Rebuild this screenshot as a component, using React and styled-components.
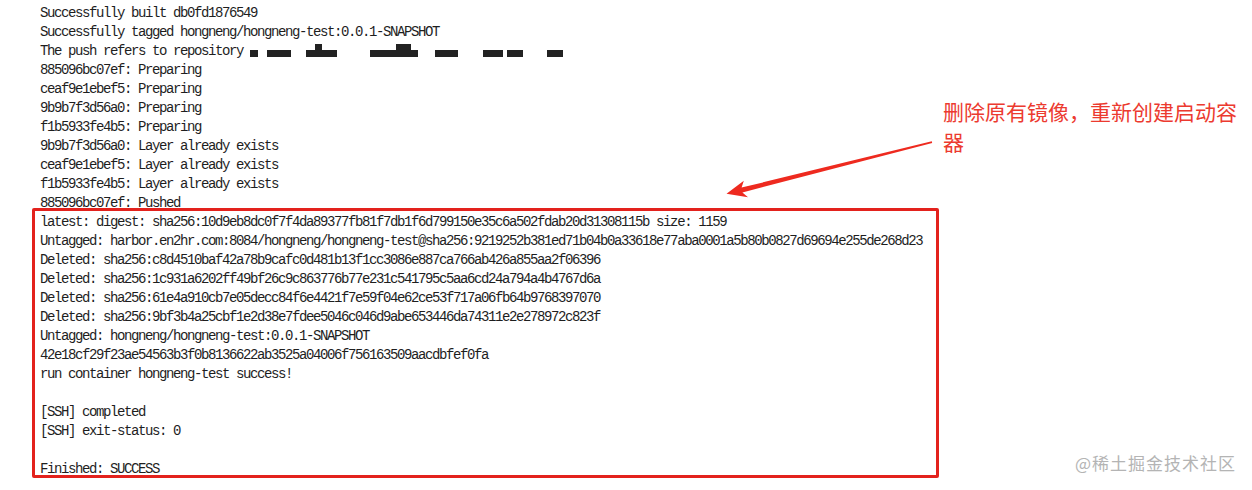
import React from "react";
import styled, { createGlobalStyle } from "styled-components";

const Global = createGlobalStyle`
  html, body { margin: 0; padding: 0; background: #ffffff; }
`;

const Page = styled.div`
  position: relative;
  width: 1252px;
  height: 490px;
  overflow: hidden;
  box-sizing: border-box;
  padding: 4px 0 0 40px;
  background: #ffffff;
  font-family: "Liberation Mono", "Courier New", monospace;
  font-size: 14px;
  letter-spacing: -1.4px;
  line-height: 19px;
  color: #1e1e1e;
`;

const Line = styled.div`
  min-height: 19px;
  white-space: pre;
`;

const RedactGroup = styled.span`
  display: inline-flex;
  align-items: flex-end;
  vertical-align: -2px;
`;

const Redact = styled.span`
  display: block;
  width: ${(p) => p.$w}px;
  height: ${(p) => p.$h || 7}px;
  margin-left: ${(p) => p.$gap || 0}px;
  background: #222222;
`;

const Highlight = styled.div`
  box-sizing: border-box;
  width: 907px;
  height: 270px;
  margin: -5px 0 0 -8px;
  padding: 2px 0 0 5px;
  border: 3px solid #e3221d;
  border-radius: 2px;
`;

const Callout = styled.div`
  position: absolute;
  left: 943px;
  top: 96px;
  width: 300px;
  font-family: "Noto Sans CJK SC", "Noto Sans", sans-serif;
  font-size: 21px;
  line-height: 30px;
  letter-spacing: 0;
  color: #ec3a2f;
`;

const Arrow = styled.svg`
  position: absolute;
  left: 720px;
  top: 130px;
  width: 220px;
  height: 75px;
`;

const Watermark = styled.div`
  position: absolute;
  left: 1075px;
  top: 451px;
  font-family: "Noto Sans CJK SC", "Noto Sans", sans-serif;
  font-size: 17px;
  line-height: 24px;
  letter-spacing: 1px;
  color: #b4b4b4;
`;

const topLines = [
  "Successfully built db0fd1876549",
  "Successfully tagged hongneng/hongneng-test:0.0.1-SNAPSHOT",
  null,
  "885096bc07ef: Preparing",
  "ceaf9e1ebef5: Preparing",
  "9b9b7f3d56a0: Preparing",
  "f1b5933fe4b5: Preparing",
  "9b9b7f3d56a0: Layer already exists",
  "ceaf9e1ebef5: Layer already exists",
  "f1b5933fe4b5: Layer already exists",
  "885096bc07ef: Pushed",
];

const boxLines = [
  "latest: digest: sha256:10d9eb8dc0f7f4da89377fb81f7db1f6d799150e35c6a502fdab20d31308115b size: 1159",
  "Untagged: harbor.en2hr.com:8084/hongneng/hongneng-test@sha256:9219252b381ed71b04b0a33618e77aba0001a5b80b0827d69694e255de268d23",
  "Deleted: sha256:c8d4510baf42a78b9cafc0d481b13f1cc3086e887ca766ab426a855aa2f06396",
  "Deleted: sha256:1c931a6202ff49bf26c9c863776b77e231c541795c5aa6cd24a794a4b4767d6a",
  "Deleted: sha256:61e4a910cb7e05decc84f6e4421f7e59f04e62ce53f717a06fb64b9768397070",
  "Deleted: sha256:9bf3b4a25cbf1e2d38e7fdee5046c046d9abe653446da74311e2e278972c823f",
  "Untagged: hongneng/hongneng-test:0.0.1-SNAPSHOT",
  "42e18cf29f23ae54563b3f0b8136622ab3525a04006f756163509aacdbfef0fa",
  "run container hongneng-test success!",
  "",
  "[SSH] completed",
  "[SSH] exit-status: 0",
  "",
  "Finished: SUCCESS",
];

// redaction marks: [width, height, gap-before]
const marks = [
  [8, 7, 0],
  [24, 7, 9],
  [9, 7, 15],
  [7, 13, 0],
  [15, 7, 0],
  [26, 7, 33],
  [15, 13, 0],
  [7, 7, 0],
  [23, 7, 17],
  [20, 7, 25],
  [16, 7, 4],
  [16, 7, 24],
];

export default function App() {
  return (
    <>
      <Global />
      <Page>
        {topLines.map((t, i) =>
          t === null ? (
            <Line key={i}>
              {"The push refers to repository "}
              <RedactGroup>
                {marks.map(([w, h, g], j) => (
                  <Redact key={j} $w={w} $h={h} $gap={g} />
                ))}
              </RedactGroup>
            </Line>
          ) : (
            <Line key={i}>{t}</Line>
          )
        )}
        <Highlight>
          {boxLines.map((t, i) => (
            <Line key={i}>{t}</Line>
          ))}
        </Highlight>
        <Callout>删除原有镜像，重新创建启动容器</Callout>
        <Arrow viewBox="720 130 220 75">
          <polygon
            points="931.8,141.2 741.6,187.6 743.8,180.7 726.5,193.8 748.0,197.2 742.4,192.4 932.2,142.9"
            fill="#ee2a1f"
          />
        </Arrow>
        <Watermark>@稀土掘金技术社区</Watermark>
      </Page>
    </>
  );
}
